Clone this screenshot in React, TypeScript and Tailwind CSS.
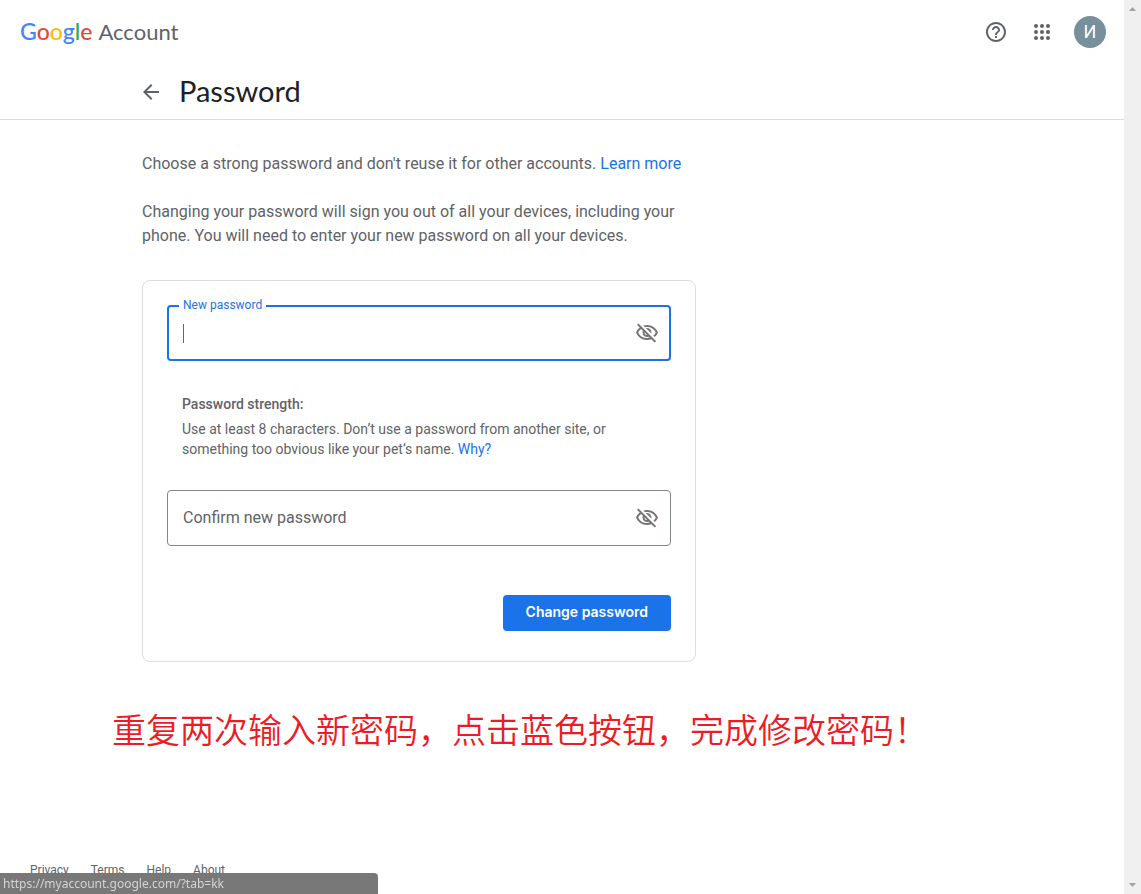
import React from 'react';
import { MdArrowBack, MdHelpOutline, MdOutlineVisibilityOff } from 'react-icons/md';

const footerLinks = ['Privacy', 'Terms', 'Help', 'About'];
const dots = [6, 12, 18];

function AppsIcon() {
  return (
    <svg viewBox="0 0 24 24" className="size-6 fill-current" aria-hidden="true">
      {dots.map((y) => dots.map((x) => <circle key={`${x}-${y}`} cx={x} cy={y} r="2" />))}
    </svg>
  );
}

function Logo() {
  return (
    <a href="#home" className="flex items-baseline gap-1.5 pb-0.5 font-[Lato,sans-serif] text-[23px] leading-8 text-[#5f6368]">
      <span className="font-medium">
        <span className="text-[#4285f4]">G</span>
        <span className="text-[#ea4335]">o</span>
        <span className="text-[#fbbc04]">o</span>
        <span className="text-[#4285f4]">g</span>
        <span className="text-[#34a853]">l</span>
        <span className="text-[#ea4335]">e</span>
      </span>
      <span className="text-[22px]">Account</span>
    </a>
  );
}

function Header() {
  return (
    <header className="border-b border-[#dadce0]">
      <div className="flex h-16 items-center justify-between pr-[18px] pl-5">
        <Logo />
        <div className="flex items-center text-[#5f6368]">
          <a href="#help" aria-label="Help" className="mr-[22px]">
            <MdHelpOutline className="size-6" />
          </a>
          <button type="button" aria-label="Google apps" className="mr-5">
            <AppsIcon />
          </button>
          <button
            type="button"
            aria-label="Profile"
            className="size-8 rounded-full bg-[#78909c] text-lg leading-8 text-white"
          >
            И
          </button>
        </div>
      </div>
      <div className="mx-auto flex h-[55px] w-full max-w-[840px] items-center gap-4">
        <a href="#back" aria-label="Back" className="-ml-[3px] text-[#5f6368]">
          <MdArrowBack className="size-6" />
        </a>
        <h1 className="pb-0.5 font-[Lato,sans-serif] text-[29px] leading-9 text-[#202124]">
          Password
        </h1>
      </div>
    </header>
  );
}

function VisibilityButton() {
  return (
    <button
      type="button"
      aria-label="Show password"
      className="absolute top-4 right-3 text-[#757575]"
    >
      <MdOutlineVisibilityOff className="size-6" />
    </button>
  );
}

function PasswordForm() {
  return (
    <form className="w-full max-w-[554px] rounded-lg border border-[#dadce0] px-6 pt-6 pb-[30px]">
      <div className="relative">
        <input
          id="new-password"
          type="password"
          className="block h-14 w-full rounded border-2 border-[#1a73e8] px-3.5 text-base text-[#202124] outline-none"
        />
        <label
          htmlFor="new-password"
          className="absolute -top-2 left-3 bg-white px-1 text-xs leading-4 text-[#1a73e8]"
        >
          New password
        </label>
        <span className="absolute top-[19px] left-4 h-[19px] w-px bg-[#1a73e8]" />
        <VisibilityButton />
      </div>

      <div className="mt-[33px] px-[15px] text-sm leading-5 text-[#5f6368]">
        <h2 className="mb-[5px] font-medium">Password strength:</h2>
        <p>
          Use at least 8 characters. Don’t use a password from another site, or something too
          obvious like your pet’s name.{' '}
          <a href="#why" className="text-[#1a73e8]">
            Why?
          </a>
        </p>
      </div>

      <div className="relative mt-[31px]">
        <input
          id="confirm-password"
          type="password"
          placeholder=" "
          className="peer block h-14 w-full rounded border border-[#80868b] px-[15px] text-base text-[#202124] outline-none"
        />
        <label
          htmlFor="confirm-password"
          className="absolute top-4 left-4 hidden cursor-text text-base leading-6 text-[#5f6368] peer-placeholder-shown:block"
        >
          Confirm new password
        </label>
        <VisibilityButton />
      </div>

      <div className="mt-[49px] flex justify-end">
        <button
          type="submit"
          className="h-9 rounded bg-[#1a73e8] px-[23px] pb-0.5 font-[Inter,sans-serif] text-sm font-semibold text-white"
        >
          Change password
        </button>
      </div>
    </form>
  );
}

function Scrollbar() {
  return (
    <div className="flex w-[17px] shrink-0 flex-col items-center justify-between bg-[#f0f0f0] py-[7px] text-[#a3a3a3]">
      <svg viewBox="0 0 7 4" className="h-1 w-[7px] fill-current" aria-hidden="true">
        <path d="M3.5 0 7 4H0z" />
      </svg>
      <svg viewBox="0 0 7 4" className="h-1 w-[7px] fill-current" aria-hidden="true">
        <path d="M3.5 4 7 0H0z" />
      </svg>
    </div>
  );
}

export default function App() {
  return (
    <div className="flex min-h-screen bg-white font-[Roboto,sans-serif]">
      <div className="flex min-w-0 flex-1 flex-col">
        <Header />
        <main>
          <div className="mx-auto w-full max-w-[840px] pt-8 text-base leading-6 text-[#5f6368]">
            <p>
              Choose a strong password and don't reuse it for other accounts.{' '}
              <a href="#learn" className="text-[#1a73e8]">
                Learn more
              </a>
            </p>
            <p className="mt-6 mb-8 max-w-[554px]">
              Changing your password will sign you out of all your devices, including your phone.
              You will need to enter your new password on all your devices.
            </p>
            <PasswordForm />
          </div>
          <p
            lang="zh-CN"
            className="mt-[43px] px-28 font-['Noto_Sans_CJK_SC',sans-serif] text-[34px] leading-[48px] font-[350] text-[#ed1c24]"
          >
            重复两次输入新密码，点击蓝色按钮，完成修改密码！
          </p>
        </main>
        <footer className="mt-auto flex gap-[22px] px-[30px] pb-4 text-xs leading-4 text-[#5f6368]">
          {footerLinks.map((label) => (
            <a key={label} href={`#${label.toLowerCase()}`}>
              {label}
            </a>
          ))}
        </footer>
      </div>
      <Scrollbar />
      <div className="fixed bottom-0 left-0 h-[21px] w-[378px] rounded-tr bg-[#747474]/97 px-[3px] font-['Noto_Sans',sans-serif] text-xs leading-[21px] text-[#d4d4d4]">
        https://myaccount.google.com/?tab=kk
      </div>
    </div>
  );
}
